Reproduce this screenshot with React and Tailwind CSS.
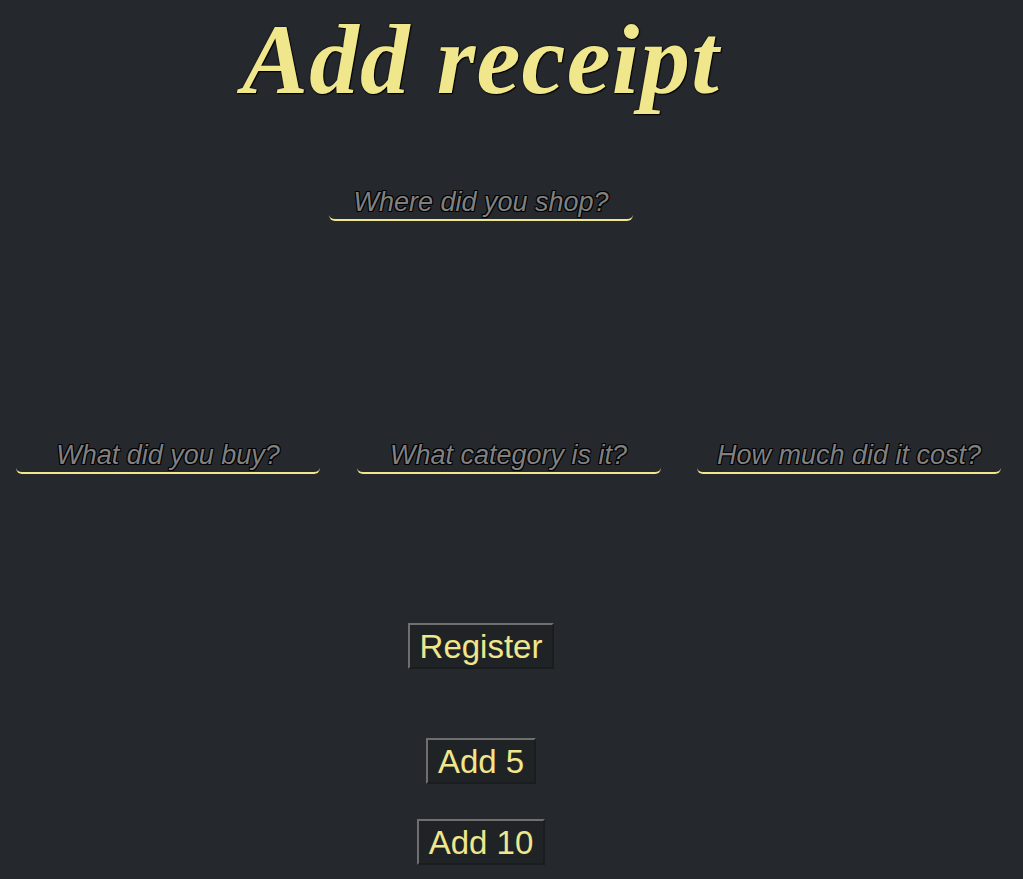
export default function App() {
  const inputCls =
    "w-[304px] h-[36px] bg-transparent border-0 border-b-2 border-[#f0e68c] rounded-b-[6px] text-center text-[27px] italic text-[#f0e68c] placeholder:text-[#808080] [text-shadow:1px_1px_0_#000,-1px_-1px_0_#000,1px_-1px_0_#000,-1px_1px_0_#000] outline-none font-['Liberation_Sans',Arial,sans-serif]";
  const btnCls =
    "h-[46px] px-[10px] bg-[#1f2326] border-2 border-t-[#6f6f6f] border-l-[#6f6f6f] border-b-[#1a1d1f] border-r-[#1a1d1f] text-[#f0e68c] text-[33px] leading-none font-['Liberation_Sans',Arial,sans-serif]";

  return (
    <div className="min-h-[879px] w-full bg-[#25292d] font-['Liberation_Sans',Arial,sans-serif]">
      <div className="w-[962px] flex flex-col items-center">
        <h1 className="mt-[4px] text-[99px] leading-[112px] font-bold italic tracking-[1.2px] text-[#f0e68c] font-['Liberation_Serif',serif] [text-shadow:0_0_2px_#000,1px_1px_1px_#000]">
          Add receipt
        </h1>
        <input className={`${inputCls} mt-[69px]`} placeholder="Where did you shop?" />
      </div>
      <div className="mt-[217px] flex justify-between px-[16px] w-[1017px]">
        <input className={inputCls} placeholder="What did you buy?" />
        <input className={inputCls} placeholder="What category is it?" />
        <input className={inputCls} placeholder="How much did it cost?" />
      </div>
      <div className="w-[962px] flex flex-col items-center">
        <button className={`${btnCls} mt-[149px]`}>Register</button>
        <button className={`${btnCls} mt-[69px]`}>Add 5</button>
        <button className={`${btnCls} mt-[35px]`}>Add 10</button>
      </div>
    </div>
  );
}
